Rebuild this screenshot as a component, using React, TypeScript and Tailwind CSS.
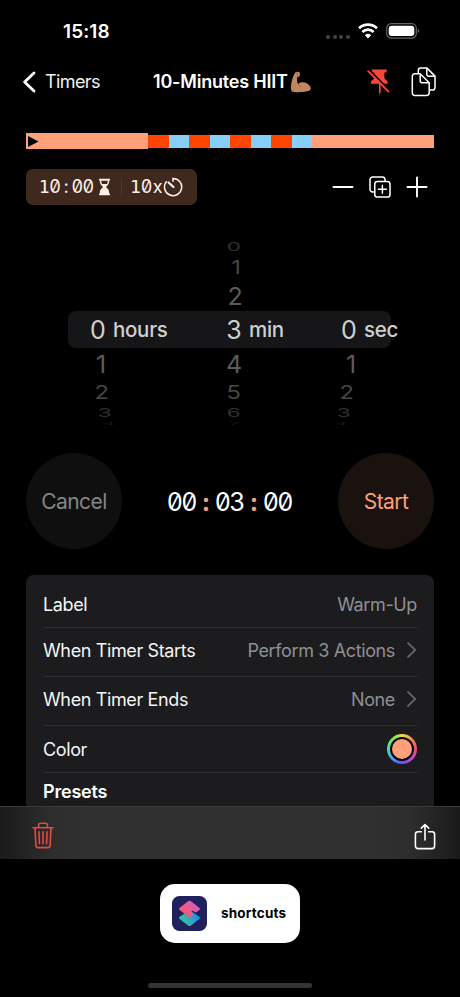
import type { ReactNode } from 'react'
import clsx from 'clsx'

const segments = [
  { w: 'w-[20.5px]', color: 'bg-[#ff4500]' },
  { w: 'w-[20.5px]', color: 'bg-[#87cefa]' },
  { w: 'w-[20.5px]', color: 'bg-[#ff4500]' },
  { w: 'w-[20.5px]', color: 'bg-[#87cefa]' },
  { w: 'w-[20.5px]', color: 'bg-[#ff4500]' },
  { w: 'w-[20.5px]', color: 'bg-[#87cefa]' },
  { w: 'w-[20.5px]', color: 'bg-[#ff4500]' },
  { w: 'w-[20.5px]', color: 'bg-[#87cefa]' },
]

// offset from the centre row -> row height, squash and fade
const wheel: Record<string, string> = {
  '-3': 'h-[17px] scale-x-90 scale-y-[0.48] text-[#303030]',
  '-2': 'h-[25px] scale-x-95 scale-y-[0.76] text-[#444444]',
  '-1': 'h-[32px] scale-y-[0.96] text-[#5c5c5c]',
  '0': 'h-[36px] text-[#cfcfcf]',
  '1': 'h-[32px] scale-y-[0.96] text-[#5c5c5c]',
  '2': 'h-[25px] scale-x-95 scale-y-[0.76] text-[#484848]',
  '3': 'h-[16px] scale-x-90 scale-y-[0.46] text-[#303030]',
  '4': 'h-[6px] scale-x-75 scale-y-[0.12] text-[#1c1c1c]',
}

// shifts[i] is the sideways drift of the i-th row, top to bottom
function Wheel({ value, unit, shifts, className }: { value: number; unit: string; shifts: number[]; className: string }) {
  return (
    <div className={clsx('relative flex flex-col items-center w-6', className)}>
      {[-3, -2, -1, 0, 1, 2, 3, 4].map((o, i) => (
        <div
          key={o}
          className={clsx('flex items-center justify-center text-[25px] leading-none', wheel[String(o)])}
          style={{ translate: `${shifts[i]}px 0` }}
        >
          {value + o >= 0 ? value + o : ''}
        </div>
      ))}
      <span className="absolute top-[82px] left-[27px] text-[20.5px] leading-none font-medium tracking-[-0.3px] text-[#cfcfcf]">{unit}</span>
    </div>
  )
}

function Row({ label, children, className }: { label: string; children?: ReactNode; className: string }) {
  return (
    <div className={clsx('flex items-center justify-between border-b border-[#303032] text-[18px] tracking-[-0.37px]', className)}>
      <span className="text-[#f5f5f5]">{label}</span>
      <div className="flex items-center text-[#8f8f94]">{children}</div>
    </div>
  )
}

function Chevron() {
  return (
    <svg width="11" height="18" viewBox="0 0 11 18" className="ml-[11px]" fill="none" stroke="#626266" strokeWidth="1.8" strokeLinecap="round" strokeLinejoin="round">
      <path d="M2 2l7.2 7L2 16" />
    </svg>
  )
}

function StatusBar() {
  return (
    <div className="flex h-[62px] items-center justify-between pl-[63px] pr-[40px]">
      <span className="pt-[2px] text-[19px] font-semibold tracking-[0.1px]">15:18</span>
      <div className="flex items-center">
        <div className="mt-[11px] mr-[8px] flex gap-[2.6px]">
          {[0, 1, 2, 3].map((i) => (
            <span key={i} className="size-[4px] rounded-full bg-[#454545]" />
          ))}
        </div>
        <svg width="20" height="16" viewBox="0 0 20 16" fill="none" stroke="#fff" strokeWidth="2.7">
          <path d="M1 5.3a13 13 0 0 1 18 0" />
          <path d="M4.4 8.9a8.1 8.1 0 0 1 11.2 0" />
          <path d="M10 15.4l-3.1-3.2a4.5 4.5 0 0 1 6.2 0z" fill="#fff" stroke="none" />
        </svg>
        <svg width="34" height="16" viewBox="0 0 34 16" className="ml-[8px]">
          <rect x="0.7" y="0.7" width="29.6" height="14.4" rx="4.6" fill="none" stroke="#666" strokeWidth="1.2" />
          <rect x="2.7" y="2.7" width="25.6" height="10.4" rx="3" fill="#fff" />
          <path d="M31.8 5.6c1.5.8 1.5 3.9 0 4.7z" fill="#777" />
        </svg>
      </div>
    </div>
  )
}

function NavBar() {
  return (
    <div className="flex h-[40px] items-center pl-[22px] pr-[23px]">
      <svg width="14" height="22" viewBox="0 0 14 22" fill="none" stroke="#fff" strokeWidth="2.8" strokeLinecap="round" strokeLinejoin="round">
        <path d="M12 2L2.6 11l9.4 9" />
      </svg>
      <span className="ml-[9px] w-[108px] pb-[2px] text-[18px] tracking-[-0.6px] text-[#f2f2f2]">Timers</span>
      <span className="pb-[2px] text-[18px] font-semibold tracking-[-0.2px] whitespace-nowrap">10-Minutes HIIT</span>
      <svg width="22" height="22" viewBox="0 0 22 22" className="ml-[2px] shrink-0">
        <path d="M5.2 1.500C6.400.500 8.800.300 9.700 1.700c.7 1.200.1 3.200-.9 4-.6.500-1.500.5-1.700 1-.3 2.200.1 4.600 1 6.300 2-2 6-2.200 9-.5 2.500 1.400 3.800 3.500 3.800 5 0 2-3.800 3.200-8.400 3.500-4.200.3-8.900.2-10.900-.8C-.1 15.500 2 6.500 5.200 1.500z" fill="#c08660" />
        <path d="M7.900 13c.5 1.200 1.300 1.900 2.600 2M6.500 5.900c.8-.6 1.700-.3 2.300-.1M7 2.300l.2 1.600" fill="none" stroke="#91603f" strokeWidth="0.8" strokeLinecap="round" />
      </svg>
      <svg width="23" height="28" viewBox="0 0 23 28" className="ml-auto shrink-0">
        <path d="M5.500 1.500h14c.6 0 .6 1.600 0 2.100l-2.300 1.700.4 5.400c2 1.100 3.200 2.700 3.200 4.300 0 .5-.4.7-.9.700H13.600v8.600l-.9 2.500-.8-2.500v-8.600H4.700c-.5 0-.9-.2-.9-.7 0-1.600 1.200-3.200 3.300-4.300l.4-5.400-2.400-1.700c-.6-.5-.6-2.100.4-2.100z" fill="#ff453a" />
        <path d="M2.300 2.100L22.600 22.500" stroke="#000" strokeWidth="2" />
        <path d="M1.200 3.200L21.500 23.600" stroke="#ff453a" strokeWidth="1.700" strokeLinecap="round" />
      </svg>
      <svg width="26" height="30" viewBox="0 0 26 30" className="ml-[21px] shrink-0" fill="none" stroke="#fff" strokeWidth="1.500" strokeLinejoin="round">
        <path d="M7.300 6.500V3.600a2.500 2.500 0 0 1 2.500-2.500h6.200l8 8v11.500a2.500 2.500 0 0 1-2.500 2.500H19" />
        <path d="M15.800 1.300v5.900a2 2 0 0 0 2 2h6" />
        <path d="M3.800 6.800h5.400l9 9v10a2.700 2.700 0 0 1-2.700 2.700H4a2.700 2.700 0 0 1-2.700-2.700V9.300a2.500 2.500 0 0 1 2.500-2.500z" fill="#000" />
        <path d="M9.200 7v6.800a2 2 0 0 0 2 2h6.800" />
      </svg>
    </div>
  )
}

// fixed-pitch digits with slashed zeros
function Digits({ text, cell }: { text: string; cell: string }) {
  return (
    <span className="flex items-baseline">
      {text.split('').map((c, i) => (
        <span
          key={i}
          className={clsx('inline-flex justify-center leading-none', cell, c === '1' ? "font-['DejaVu_Sans_Mono']" : "[font-feature-settings:'zero','tnum']")}
        >
          {c}
        </span>
      ))}
    </span>
  )
}

function Summary() {
  return (
    <div className="mt-5 flex h-9 items-center justify-between pr-[6px]">
      <div className="flex h-9 w-[171px] items-center rounded-[7px] bg-[#3f291f] pl-[12.5px] text-[18px] text-[#fff1e8]">
        <Digits text="10:00" cell="w-[11.1px]" />
        <svg width="13" height="18" viewBox="0 0 13 18" className="ml-[4px]" fill="#fff1e8">
          <path d="M1.500.8h10a1 1 0 0 1 0 1.800h-.3c0 3-.8 4.500-3.300 6.400 2.500 1.900 3.300 3.500 3.300 6.400h.3a1 1 0 0 1 0 1.800h-10a1 1 0 0 1 0-1.800h.3c0-2.900.8-4.500 3.300-6.400C2.600 7.100 1.800 5.600 1.800 2.600h-.3a1 1 0 0 1 0-1.800z" />
          <path d="M3.200 2.700h6.600c0 1.500-.3 2.400-.9 3.200H4.100c-.6-.8-.9-1.700-.9-3.200z" fill="#3f291f" />
        </svg>
        <span className="ml-[10px] h-[18px] w-px bg-[#50372b]" />
        <span className="ml-[8px]">
          <Digits text="10x" cell="w-[11.1px]" />
        </span>
        <svg width="20" height="20" viewBox="0 0 20 20" fill="none" stroke="#fff1e8" strokeWidth="1.500" strokeLinecap="round">
          <path d="M10 4.300V1.400A8.600 8.600 0 1 1 3.300 4.700" />
          <path d="M5.500 5.500l5 4.500" strokeWidth="2.200" />
        </svg>
      </div>
      <div className="flex items-center gap-[15px]">
        <svg width="22" height="22" viewBox="0 0 22 22" stroke="#fff" strokeWidth="1.900" strokeLinecap="round">
          <path d="M1.500 11h19" />
        </svg>
        <svg width="22" height="22" viewBox="0 0 22 22" fill="none" stroke="#fff" strokeWidth="1.500" strokeLinecap="round">
          <path d="M5.400 16H3.800A2.600 2.600 0 0 1 1 13.400V3.600A2.600 2.600 0 0 1 3.800 1h9.600A2.600 2.600 0 0 1 16 3.600v1.600" />
          <rect x="5.800" y="5.600" width="15.200" height="15.400" rx="2.600" />
          <path d="M13.400 9.300v8M9.400 13.300h8" />
        </svg>
        <svg width="22" height="22" viewBox="0 0 22 22" stroke="#fff" strokeWidth="1.900" strokeLinecap="round">
          <path d="M1.500 11h19M11 1.500v19" />
        </svg>
      </div>
    </div>
  )
}

function Picker() {
  return (
    <div className="relative mt-[33px] h-[189px]">
      <div className="absolute top-[73px] left-[42px] h-[37px] w-[323px] rounded-[8px] bg-[#161618]" />
      <div className="flex">
        <Wheel value={0} unit="hours" shifts={[0, 0, 0, 0, 3, 4, 7, 11]} className="ml-[60px]" />
        <Wheel value={3} unit="min" shifts={[0, 2, 1, 0, 0, 0, 0, 0]} className="ml-[112px]" />
        <Wheel value={0} unit="sec" shifts={[0, 0, 0, 0, 2, -2, -5, -8]} className="ml-[91px]" />
      </div>
    </div>
  )
}

function Controls() {
  return (
    <div className="mt-[26px] flex h-24 items-center justify-between">
      <div className="flex size-24 items-center justify-center rounded-full bg-[#0f0f0f] pt-[2px] text-[21px] tracking-[-0.6px] text-[#858585]">Cancel</div>
      <div className="flex items-center pt-[3px] text-[25px]">
        <Digits text="00" cell="w-[14.5px]" />
        <span className="w-[19px] text-center leading-none font-bold text-[#ffa07a]">:</span>
        <Digits text="03" cell="w-[14.5px]" />
        <span className="w-[19px] text-center leading-none font-bold text-[#ffa07a]">:</span>
        <Digits text="00" cell="w-[14.5px]" />
      </div>
      <div className="flex size-24 items-center justify-center rounded-full bg-[#1a120e] pt-[2px] text-[21px] tracking-[-0.6px] text-[#ffa07a]">Start</div>
    </div>
  )
}

function Toolbar() {
  return (
    <div className="flex h-[53px] items-center justify-between border-t border-[#3a3a3a] bg-[linear-gradient(90deg,#1a1a1a_0px,#222222_20px,#2d2d2d_50px,#303030_90px,#303030_370px,#2d2d2d_410px,#222222_440px,#1a1a1a_460px)] pr-[24px] pl-[32px]">
      <svg width="22" height="27" viewBox="0 0 22 27" className="mt-[5px]" fill="none" stroke="#e5493f" strokeWidth="1.600" strokeLinecap="round" strokeLinejoin="round">
        <path d="M1 5.800h20M6.600 5.800V3.200a2 2 0 0 1 2-2h4.800a2 2 0 0 1 2 2v2.600M3 5.800l.9 17.600a2.300 2.300 0 0 0 2.300 2.200h9.600a2.300 2.300 0 0 0 2.300-2.200L19 5.800" />
        <path d="M7 9.700l.4 12M11 9.700v12M15 9.700l-.4 12" />
      </svg>
      <svg width="22" height="27" viewBox="0 0 22 27" className="mt-[6px]" fill="none" stroke="#fff" strokeWidth="1.600" strokeLinecap="round" strokeLinejoin="round">
        <path d="M7.300 8.800H4a2.600 2.600 0 0 0-2.600 2.600V23A2.600 2.600 0 0 0 4 25.600h14a2.600 2.600 0 0 0 2.600-2.600V11.400A2.600 2.600 0 0 0 18 8.800h-3.300M11 17V1.600M7.300 5.100L11 1.500l3.700 3.600" />
      </svg>
    </div>
  )
}

function ShortcutsIcon() {
  return (
    <svg width="35" height="35" viewBox="0 0 35 35">
      <defs>
        <linearGradient id="top" x1="0" y1="0.8" x2="1" y2="0.1">
          <stop offset="0" stopColor="#ff5364" />
          <stop offset="0.5" stopColor="#e85c92" />
          <stop offset="1" stopColor="#c55be0" />
        </linearGradient>
        <linearGradient id="bottom" x1="0" y1="0.7" x2="1" y2="0.3">
          <stop offset="0" stopColor="#2fc8a0" />
          <stop offset="0.5" stopColor="#36a9ba" />
          <stop offset="1" stopColor="#1684ff" />
        </linearGradient>
      </defs>
      <rect width="35" height="35" rx="7.500" fill="#20205c" />
      <path d="M7.700 20.800L16 15c1-.7 2-.7 3 0l8.300 5.800c.9.700.9 1.400 0 2.100L19 29.400c-1 .8-2 .8-3 0l-8.300-6.500c-.9-.7-.9-1.400 0-2.100z" fill="url(#bottom)" />
      <path d="M16 5.300c1-.8 2-.8 3 0l8.300 6.500c.9.700.9 1.500 0 2.200L24 16.600l-3-1.600c-1.500-.7-2.600.3-1.600 1.300l2.300 2.100L19 20.500c-1 .8-2 .8-3 0L7.700 14c-.9-.7-.9-1.500 0-2.200z" fill="url(#top)" />
    </svg>
  )
}

export default function App() {
  return (
    <div className="flex h-[997px] w-[460px] flex-col overflow-hidden bg-black font-[Inter,sans-serif] text-white">
      <StatusBar />
      <NavBar />
      <main className="h-[704px] overflow-hidden px-[26px] pt-[31px]">
        <div className="flex h-4 items-center">
          <div className="flex h-4 w-[122px] items-center bg-[#ffa07a] pl-[2px]">
            <svg width="11" height="11" viewBox="0 0 11 11">
              <path d="M0 0v11l10.500-5.500z" />
            </svg>
          </div>
          {segments.map((s, i) => (
            <div key={i} className={clsx('h-[13px]', s.w, s.color)} />
          ))}
          <div className="h-[13px] flex-1 bg-[#ffa07a]" />
        </div>
        <Summary />
        <Picker />
        <Controls />
        <div className="mt-[26px] h-[260px] rounded-[8px] bg-[#1c1c1e] px-[17px] pt-[6px]">
          <Row label="Label" className="h-[47px]">Warm-Up</Row>
          <Row label="When Timer Starts" className="h-[49px] pb-[4px]">
            Perform 3 Actions
            <Chevron />
          </Row>
          <Row label="When Timer Ends" className="h-[49px] pb-[4px]">
            None
            <Chevron />
          </Row>
          <Row label="Color" className="h-[47px]">
            <span className="flex size-[30px] items-center justify-center rounded-full bg-[conic-gradient(#ecd84e,#f39345,#ee4c6a,#c14be0,#6a50f0,#4a9cf0,#45dfb0,#6ee85c,#ecd84e)]">
              <span className="size-[24px] rounded-full border-2 border-black bg-[#ffa07a]" />
            </span>
          </Row>
          <h2 className="mt-[5px] text-[18px] font-semibold tracking-[-0.2px]">Presets</h2>
        </div>
      </main>
      <Toolbar />
      <div className="mt-[25px] flex h-[59px] w-[140px] items-center self-center rounded-[15px] bg-white pl-[12px]">
        <ShortcutsIcon />
        <span className="ml-[14px] text-[13.5px] font-bold tracking-[0.2px] text-black">shortcuts</span>
      </div>
      <div className="mt-[40px] h-[5px] w-[164px] self-center rounded-full bg-[#333333]" />
    </div>
  )
}
